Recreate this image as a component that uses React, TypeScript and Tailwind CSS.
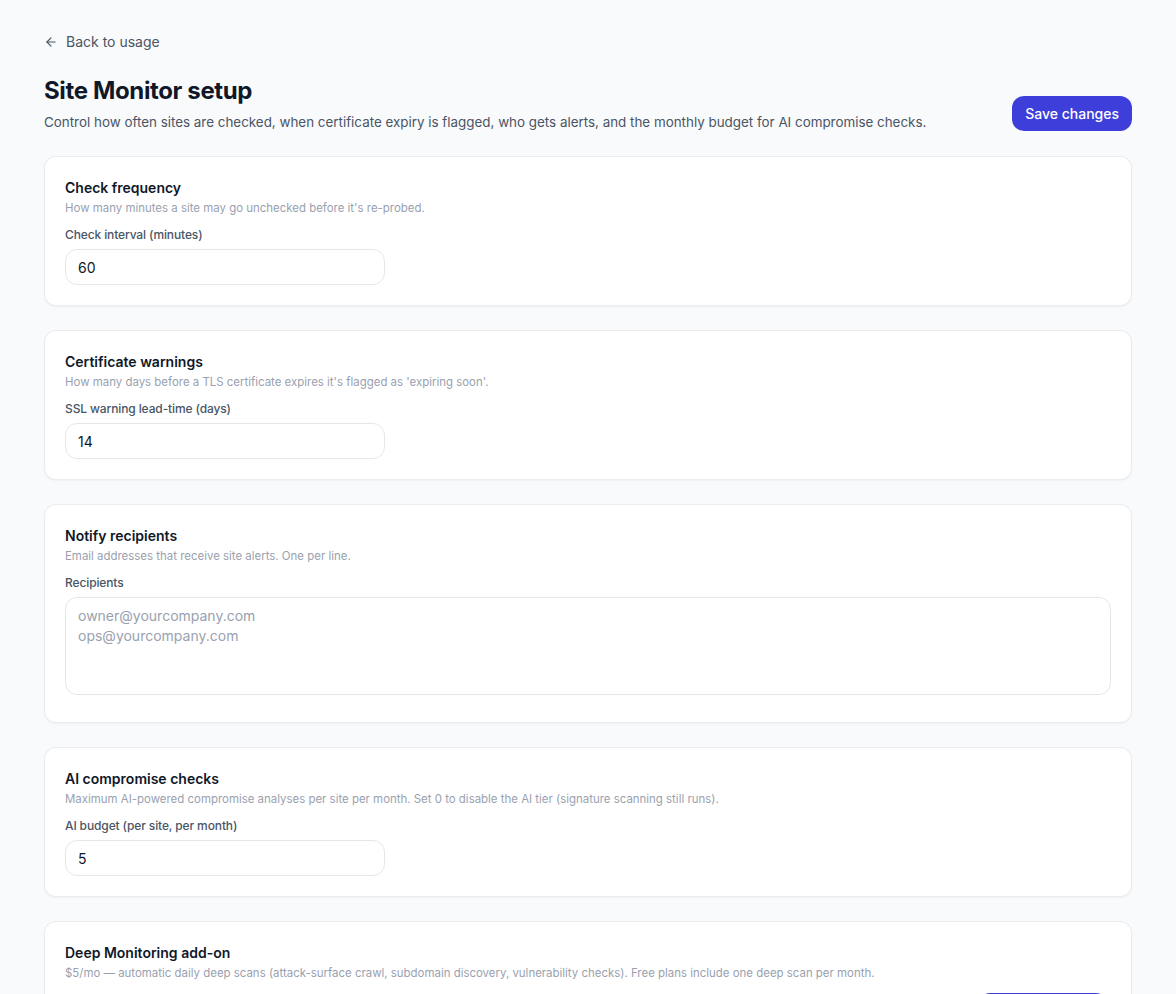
import React from "react";

function Card({ title, desc, children }: { title: string; desc: string; children?: React.ReactNode }) {
  return (
    <section className="rounded-xl border border-gray-200/80 bg-white px-5 pt-[21px] pb-5 shadow-[0_1px_2px_rgba(0,0,0,0.04)]">
      <h2 className="text-sm font-semibold leading-5 text-gray-900">{title}</h2>
      <p className="mt-0.5 text-[11.45px] leading-4 text-gray-400">{desc}</p>
      {children}
    </section>
  );
}

function NumberField({ label, value }: { label: string; value: string }) {
  return (
    <div className="mt-[11px]">
      <label className="block text-xs leading-4 font-medium tracking-[-0.01em] text-gray-600">{label}</label>
      <input
        type="text"
        defaultValue={value}
        className="mt-1.5 block h-9 w-80 rounded-xl border border-gray-200 bg-white px-3 text-sm text-gray-900 outline-none"
      />
    </div>
  );
}

export default function App() {
  return (
    <div
      className="min-h-screen bg-gray-50 px-11 pt-8 pb-10"
      style={{ fontFamily: "Inter, 'Noto Sans', sans-serif" }}
    >
      <a href="#" className="flex items-center gap-2 text-sm leading-5 text-gray-600">
        <svg width="14" height="14" viewBox="0 0 24 24" fill="none" stroke="currentColor" strokeWidth="2" strokeLinecap="round" strokeLinejoin="round">
          <path d="M19 12H5" />
          <path d="M12 19l-7-7 7-7" />
        </svg>
        Back to usage
      </a>

      <div className="mt-[23px] flex items-end justify-between">
        <div>
          <h1 className="text-2xl leading-8 font-bold tracking-[-0.015em] text-gray-900">Site Monitor setup</h1>
          <p className="mt-[5px] text-[13.4px] leading-5 text-gray-600">
            Control how often sites are checked, when certificate expiry is flagged, who gets alerts, and the monthly budget for AI compromise checks.
          </p>
        </div>
        <button className="mb-px h-[35px] rounded-xl bg-[#3e3edb] px-[13px] text-sm font-medium text-white">Save changes</button>
      </div>

      <div className="mt-6 flex flex-col gap-6">
        <Card title="Check frequency" desc="How many minutes a site may go unchecked before it's re-probed.">
          <NumberField label="Check interval (minutes)" value="60" />
        </Card>
        <Card title="Certificate warnings" desc="How many days before a TLS certificate expires it's flagged as 'expiring soon'.">
          <NumberField label="SSL warning lead-time (days)" value="14" />
        </Card>
        <Card title="Notify recipients" desc="Email addresses that receive site alerts. One per line.">
          <div className="mt-[11px]">
            <label className="block text-xs leading-4 font-medium tracking-[-0.01em] text-gray-600">Recipients</label>
            <textarea
              rows={4}
              placeholder={"owner@yourcompany.com\nops@yourcompany.com"}
              className="mt-1.5 mb-[7px] block w-full resize-none rounded-xl border border-gray-200 bg-white px-3 py-2 text-sm leading-5 text-gray-900 placeholder:text-gray-400 outline-none"
            />
          </div>
        </Card>
        <Card title="AI compromise checks" desc="Maximum AI-powered compromise analyses per site per month. Set 0 to disable the AI tier (signature scanning still runs).">
          <NumberField label="AI budget (per site, per month)" value="5" />
        </Card>
        <Card title="Deep Monitoring add-on" desc="$5/mo — automatic daily deep scans (attack-surface crawl, subdomain discovery, vulnerability checks). Free plans include one deep scan per month.">
          <div className="mt-3 flex items-center justify-between">
            <span className="text-xs text-gray-500">Not active</span>
            <button className="mr-[3px] h-9 rounded-xl bg-[#3e3edb] px-4 text-sm font-medium text-white">Enable add-on</button>
          </div>
        </Card>
      </div>
    </div>
  );
}
